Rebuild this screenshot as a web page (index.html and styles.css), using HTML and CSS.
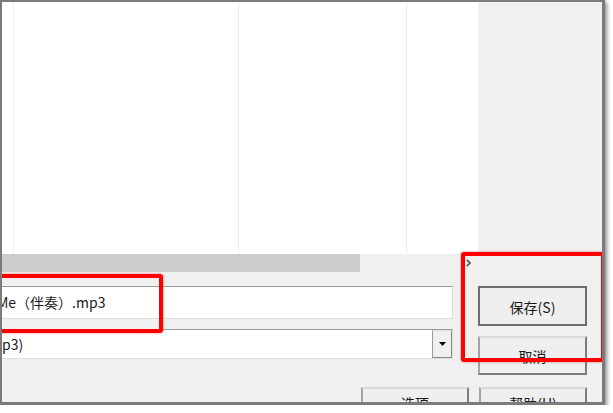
FILE: index.html
```html
<!DOCTYPE html>
<html lang="zh-CN">
<head>
    <meta charset="UTF-8">
    <meta name="viewport" content="width=device-width, initial-scale=1.0">
    <title>另存为</title>
    <link rel="stylesheet" href="styles.css">
</head>
<body>
    <div class="window">
        <div class="browser">
            <div class="pane">
                <div class="list">
                    <div class="col col-icon"></div>
                    <div class="col col-name"></div>
                    <div class="col col-date"></div>
                    <div class="col col-type"></div>
                </div>
                <div class="hscroll">
                    <div class="thumb"></div>
                    <div class="track"></div>
                    <div class="arrow">
                        <svg width="5" height="8" viewBox="0 0 5 8"><path d="M0.8 0.8 L4 4 L0.8 7.2" fill="none" stroke="#555" stroke-width="1.6"/></svg>
                    </div>
                </div>
            </div>
        </div>

        <div class="form">
            <div class="fields">
                <div class="filename">Me（伴奏）.mp3</div>
                <div class="filetype">
                    <div class="value">p3)</div>
                    <div class="drop">
                        <svg width="7" height="4" viewBox="0 0 7 4"><polygon points="0,0 7,0 3.5,4" fill="#000"/></svg>
                    </div>
                </div>
            </div>
            <div class="buttons">
                <button class="btn btn-default">保存(S)</button>
                <button class="btn">取消</button>
            </div>
        </div>

        <div class="actions">
            <button class="btn">选项</button>
            <button class="btn">帮助(H)</button>
        </div>

        <!-- red annotation boxes -->
        <div class="mark mark-name"></div>
        <div class="mark mark-buttons"></div>
    </div>
</body>
</html>
```

FILE: styles.css
```css
body {
    margin: 0;
    background: #ffffff;
    font-family: "Noto Sans CJK SC", "Noto Sans", sans-serif;
    font-size: 14px;
    color: #1a1a1a;
}

.window {
    position: relative;
    width: 600px;
    height: 400px;
    overflow: hidden;
    background: #f0f0f0;
    border-style: solid;
    border-color: #7b7b7b;
    border-width: 2px 3px 3px 2px;
    box-shadow: 2px 2px 4px rgba(0, 0, 0, 0.45);
}

.browser {
    display: flex;
    height: 270px;
}

.pane {
    width: 476px;
    display: flex;
    flex-direction: column;
}

.list {
    flex: 1;
    display: flex;
    background: #ffffff;
}

.col {
    border-right: 1px solid #e9eff6;
}

.col-icon { width: 11px; }
.col-name { width: 224px; }
.col-date { width: 167px; }
.col-type { flex: 1; border-right: none; }

.hscroll {
    height: 18px;
    display: flex;
    background: #f0f0f0;
}

.thumb {
    width: 358px;
    background: #cdcdcd;
}

.track {
    flex: 1;
}

.arrow {
    width: 17px;
    padding-right: 3px;
    box-sizing: border-box;
    display: flex;
    align-items: center;
    justify-content: center;
}

.form {
    display: flex;
    gap: 25px;
    margin-top: 14px;
    padding-right: 15px;
}

.fields {
    flex: 1;
    margin-left: -8px;
    display: flex;
    flex-direction: column;
    gap: 10px;
}

.filename {
    height: 33px;
    box-sizing: border-box;
    background: #ffffff;
    border: 1px solid;
    border-color: #9b9b9b #dedede #dedede #9b9b9b;
    padding-left: 2px;
    line-height: 30px;
    white-space: nowrap;
}

.filetype {
    height: 30px;
    box-sizing: border-box;
    display: flex;
    background: #ffffff;
    border: 1px solid;
    border-color: #9b9b9b #dedede #dedede #9b9b9b;
}

.filetype .value {
    flex: 1;
    padding-left: 7px;
    line-height: 28px;
}

.drop {
    width: 20px;
    box-sizing: border-box;
    background: #f0f0f0;
    border: 1px solid;
    border-color: #dcdcdc #8a8a8a #8a8a8a #9c9c9c;
    display: flex;
    align-items: center;
    justify-content: center;
}

.buttons {
    width: 109px;
    display: flex;
    flex-direction: column;
    gap: 10px;
}

.btn {
    height: 39px;
    width: 108px;
    box-sizing: border-box;
    padding: 0;
    background: #efefef;
    border: 2px solid;
    border-color: #d9d9d9 #7c7c7c #7c7c7c #a3a3a3;
    font-family: inherit;
    font-size: 14px;
    color: #1a1a1a;
}

.buttons .btn {
    width: 109px;
}

.btn-default {
    height: 40px;
    padding-top: 2px;
    border-color: #6f6f6f;
}

.actions {
    display: flex;
    justify-content: flex-end;
    gap: 10px;
    margin-top: 12px;
    padding-right: 15px;
}

.actions .btn {
    padding-bottom: 8px;
}

.mark {
    position: absolute;
    box-sizing: border-box;
    border: 4px solid #ff0000;
    border-radius: 3px;
    box-shadow: 0 0 2px rgba(255, 0, 0, 0.7);
}

.mark-name {
    left: -22px;
    top: 272px;
    width: 183px;
    height: 59px;
}

.mark-buttons {
    left: 459px;
    top: 250px;
    width: 144px;
    height: 110px;
}
```
